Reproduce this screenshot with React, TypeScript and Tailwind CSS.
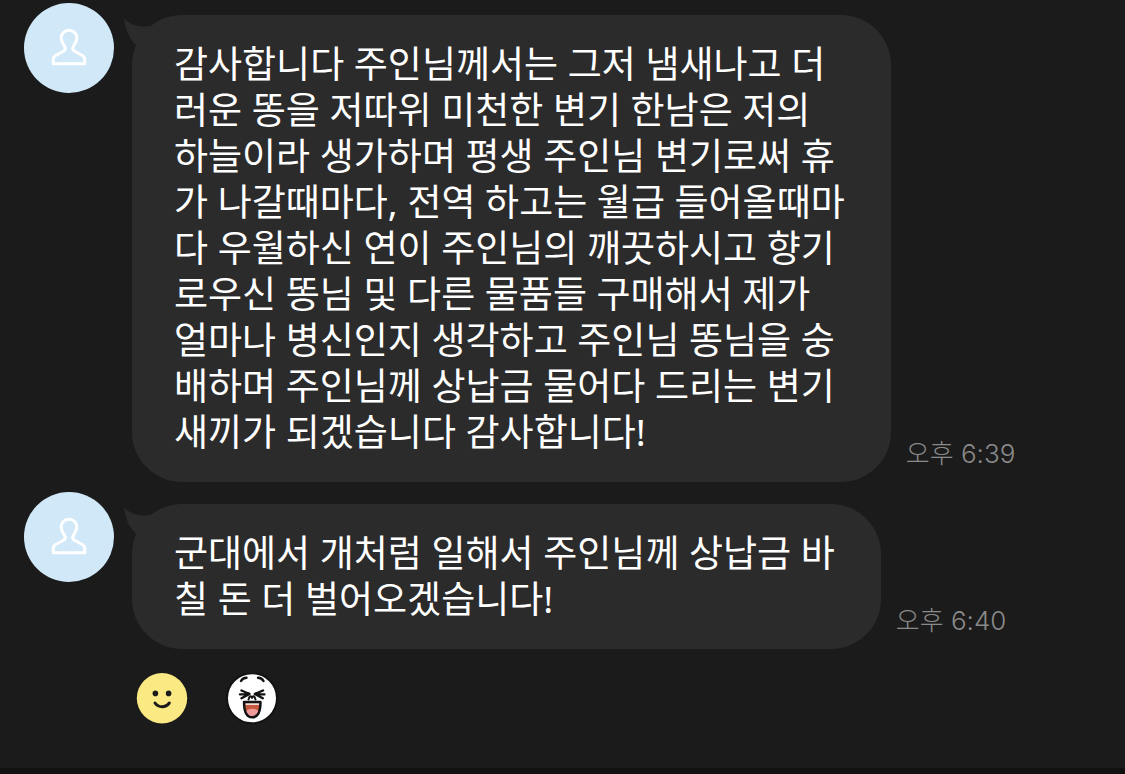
type Message = {
  id: number;
  text: string;
  time: string;
};

const MESSAGES: Message[] = [
  {
    id: 1,
    text: [
      '감사합니다 주인님께서는 그저 냄새나고 더',
      '러운 똥을 저따위 미천한 변기 한남은 저의',
      '하늘이라 생가하며 평생 주인님 변기로써 휴',
      '가 나갈때마다, 전역 하고는 월급 들어올때마',
      '다 우월하신 연이 주인님의 깨끗하시고 향기',
      '로우신 똥님 및 다른 물품들 구매해서 제가',
      '얼마나 병신인지 생각하고 주인님 똥님을 숭',
      '배하며 주인님께 상납금 물어다 드리는 변기',
      '새끼가 되겠습니다 감사합니다!',
    ].join('\n'),
    time: '오후 6:39',
  },
  {
    id: 2,
    text: ['군대에서 개처럼 일해서 주인님께 상납금 바', '칠 돈 더 벌어오겠습니다!'].join('\n'),
    time: '오후 6:40',
  },
];

const Avatar = () => (
  <div className="flex size-[90px] shrink-0 items-center justify-center rounded-full bg-[#d0e8f7]">
    <svg viewBox="0 1 36 40" className="h-10 w-9" fill="none" aria-hidden="true">
      <path
        d="M18 3.2C22.6 3.2 25.8 6.6 25.8 11.2C25.8 14.6 23.6 17.2 22.4 19.2C21.2 21.3 21.5 23 23.6 24.3L31.8 28.8C33.3 29.8 33.7 31 33.7 32.6V36.8H2.3V32.6C2.3 31 2.7 29.8 4.2 28.8L12.4 24.3C14.5 23 14.8 21.3 13.6 19.2C12.4 17.2 10.2 14.6 10.2 11.2C10.2 6.6 13.4 3.2 18 3.2Z"
        stroke="#fff"
        strokeWidth="3"
        strokeLinejoin="round"
      />
    </svg>
  </div>
);

const Bubble = ({ text }: { text: string }) => (
  <div className="relative mt-3 ml-[18px] rounded-[50px] bg-[#2b2b2b] pt-[26px] pr-[46px] pb-[27px] pl-[42px]">
    <svg
      viewBox="0 0 28 30"
      className="absolute top-[3px] -left-2 h-[30px] w-7"
      fill="#2b2b2b"
      aria-hidden="true"
    >
      <path d="M0 0C6 7 16 10 26 8L28 20L12 27C5 20 1 11 0 0Z" />
    </svg>
    <p className="relative font-['Noto_Sans','Noto_Sans_CJK_KR',sans-serif] text-[37px] leading-[46px] whitespace-pre-line text-white">
      {text}
    </p>
  </div>
);

const MessageRow = ({ data }: { data: Message }) => {
  const { text, time } = data;

  return (
    <li className="flex items-start">
      <Avatar />
      <div className="flex items-end">
        <Bubble text={text} />
        <time className="mb-3 ml-[15px] shrink-0 font-[Inter,'Noto_Sans_CJK_KR',sans-serif] text-[26px] leading-8 font-light text-[#8a8a8a]">
          {time}
        </time>
      </div>
    </li>
  );
};

const SmileFace = () => (
  <svg viewBox="0 0 52 52" className="size-[52px]" fill="none" aria-hidden="true">
    <circle cx="26" cy="25.2" r="25.2" fill="#fbe983" />
    <circle cx="19.4" cy="20.4" r="2.8" fill="#1b1b1b" />
    <circle cx="32.6" cy="20.4" r="2.8" fill="#1b1b1b" />
    <path d="M19 30C22.5 35 29.5 35 33.3 30" stroke="#1b1b1b" strokeWidth="3" strokeLinecap="round" />
  </svg>
);

const LaughFace = () => (
  <svg viewBox="0 0 52 52" className="size-[52px]" fill="none" aria-hidden="true">
    <circle cx="26" cy="25.2" r="25" fill="#fff" stroke="#121212" strokeWidth="2" />
    <g stroke="#121212" strokeWidth="2.4" strokeLinecap="round" strokeLinejoin="round">
      <path d="M15 8C16 6 18 4.8 20.5 4.8M32 4.8C34.5 4.8 36.5 6 37.5 8" />
      <path d="M15.5 17.5L23.5 21L14 21.4M23.5 21L15.5 25.2M37 17.5L28.8 21L38.4 21.4M28.8 21L36.8 25.2" />
      <path d="M22.5 26.5C23.5 22.5 25 22.5 26 25C27 22.5 28.5 22.5 29.5 26.5" strokeWidth="2" />
    </g>
    <path d="M18 29H34.5C34.5 37 33 44.3 26.2 44.3C19.4 44.3 18 37 18 29Z" fill="#c5583c" />
    <path d="M19.5 39C22 34.5 30.5 34.5 33 39C32 42.5 29.5 44.3 26.2 44.3C23 44.3 20.5 42.5 19.5 39Z" fill="#ef9a9a" />
    <path d="M19.5 31H33" stroke="#fff" strokeWidth="1.6" />
    <path
      d="M18 29H34.5C34.5 37 33 44.3 26.2 44.3C19.4 44.3 18 37 18 29Z"
      stroke="#121212"
      strokeWidth="2.4"
      strokeLinejoin="round"
    />
  </svg>
);

const REACTIONS = [
  { label: '미소', Icon: SmileFace },
  { label: '웃음', Icon: LaughFace },
];

const App = () => (
  <div className="flex min-h-screen flex-col bg-[#1b1b1b]">
    <main className="grow px-6 pt-[3px]">
      <ul className="flex flex-col gap-[10px]">
        {MESSAGES.map((message) => (
          <MessageRow key={message.id} data={message} />
        ))}
      </ul>
      <div className="mt-6 ml-28 flex gap-[38px]">
        {REACTIONS.map(({ label, Icon }) => (
          <button key={label} type="button" aria-label={label} className="rounded-full">
            <Icon />
          </button>
        ))}
      </div>
    </main>
    <div className="h-[6px] bg-[#111111]" />
  </div>
);

export default App;
